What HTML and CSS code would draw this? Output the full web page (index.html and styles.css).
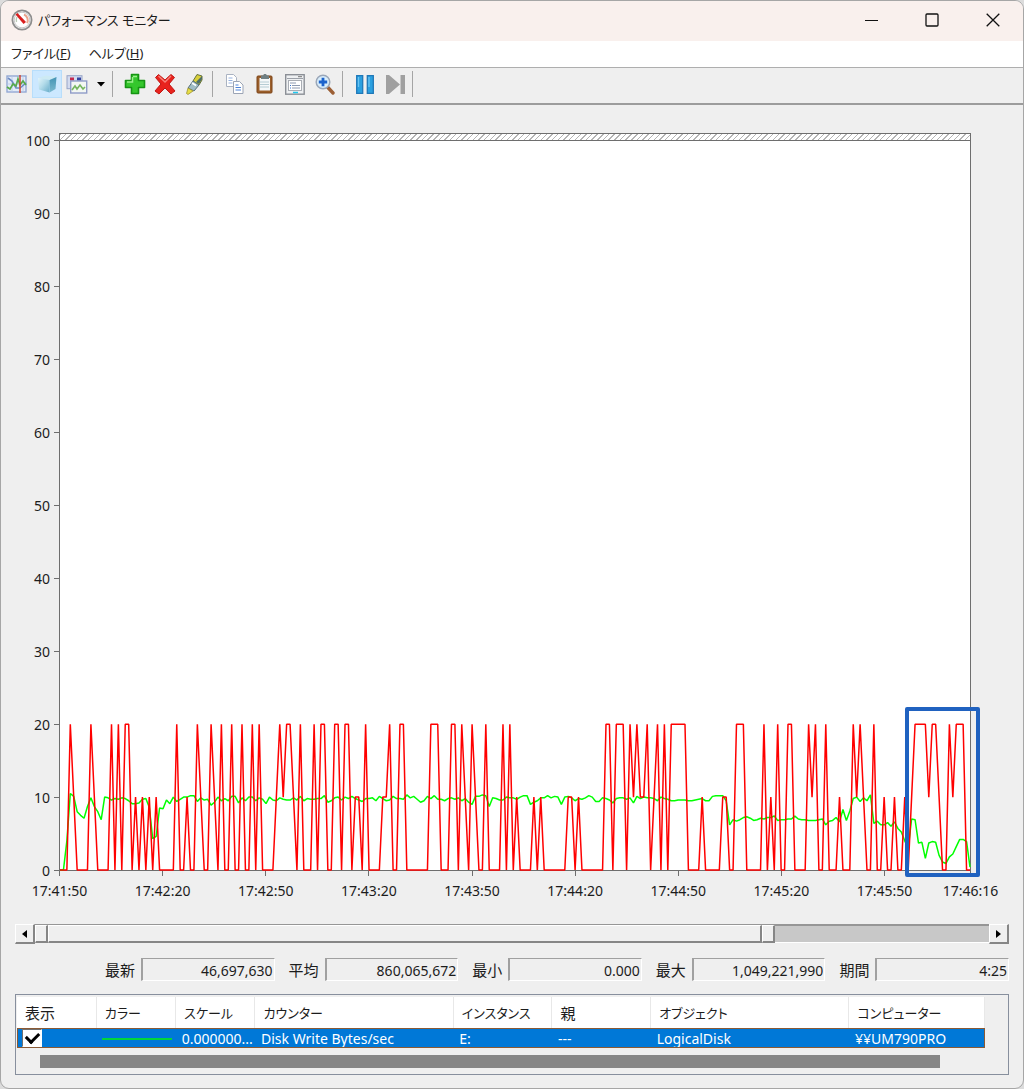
FILE: index.html
```html
<!DOCTYPE html>
<html lang="ja">
<head>
<meta charset="utf-8">
<title>パフォーマンス モニター</title>
<link rel="stylesheet" href="styles.css">
</head>
<body>
<div class="window">
  <header class="titlebar">
    <svg class="app-icon" viewBox="0 0 22 22" width="22" height="22" aria-hidden="true">
      <circle cx="11" cy="11" r="9.6" fill="#f4f4f4" stroke="#8d8d8d" stroke-width="1.8"/>
      <circle cx="11" cy="11" r="7.8" fill="#fff" stroke="#c9c9c9"/>
      <path d="M13 5.5A6 6 0 0 1 16 14" fill="none" stroke="#e9a58c" stroke-width="2"/>
      <path d="M5.5 13A6 6 0 0 1 6 8" fill="none" stroke="#b9c9b5" stroke-width="1.4"/>
      <path d="M4.500 5.500l2-1.500 8.500 9-2.500 2z" fill="#d91f1f"/>
    </svg>
    <h1 class="title">パフォーマンス モニター</h1>
    <div class="caption">
      <button class="caption-btn" aria-label="最小化"><svg viewBox="0 0 14 14" width="14" height="14"><path d="M1 7.500h13" stroke="#111"/></svg></button>
      <button class="caption-btn" aria-label="最大化"><svg viewBox="0 0 14 14" width="14" height="14"><rect x="1" y="1" width="12" height="12" rx="1" fill="none" stroke="#111" stroke-width="1.3"/></svg></button>
      <button class="caption-btn" aria-label="閉じる"><svg viewBox="0 0 14 14" width="14" height="14"><path d="M.7.7l12.6 12.6M13.3.7L.7 13.3" stroke="#111" stroke-width="1.3"/></svg></button>
    </div>
  </header>

  <nav class="menubar">
    <button class="menu">ファイル(<u>F</u>)</button>
    <button class="menu">ヘルプ(<u>H</u>)</button>
  </nav>

  <div class="toolbar">
    <button class="tool" aria-label="現在のアクティビティの表示">
      <svg viewBox="0 0 22 18" width="22" height="18">
        <rect x="1" y="1" width="19" height="16" fill="#e3ecf8" stroke="#93a9d4" stroke-width="1.400"/>
        <path d="M1 9h19M6 1v16M17 1v16" stroke="#b5c8e6" stroke-width=".8"/>
        <path d="M2 3l4 3 4 7 4 0 6-5" fill="none" stroke="#6d8cc4" stroke-width="1.600"/>
        <path d="M1 12l3 2 3-5 3 2 2-7 2 6 3-4 3 4" fill="none" stroke="#58ab4c" stroke-width="1.700"/>
        <path d="M14 0v18" stroke="#cf4632" stroke-width="1.500"/>
      </svg>
    </button>
    <button class="tool tool-active" aria-label="ログ データの表示">
      <svg viewBox="0 0 22 20" width="22" height="20">
        <defs>
          <linearGradient id="cube-front" x1="0" y1="0" x2="1" y2="1"><stop offset="0" stop-color="#e2f4fb"/><stop offset=".45" stop-color="#b4dcea"/><stop offset="1" stop-color="#68adca"/></linearGradient>
          <linearGradient id="cube-side" x1="0" y1="0" x2="0" y2="1"><stop offset="0" stop-color="#4494b4"/><stop offset="1" stop-color="#7cbad0"/></linearGradient>
        </defs>
        <path d="M2 4l8-2.500L20.500 3 13.500 6z" fill="#cdeaf3"/>
        <path d="M2 4l11.500 2v12.500L3 15.500z" fill="url(#cube-front)"/>
        <path d="M13.500 6l7-3-1 12-6 3.500z" fill="url(#cube-side)"/>
      </svg>
    </button>
    <button class="tool" aria-label="グラフの種類の変更">
      <svg viewBox="0 0 22 19" width="22" height="19">
        <rect x="1" y=".7" width="15" height="13" fill="#d3dbef" stroke="#98a6c8"/>
        <rect x="4" y="2.500" width="4" height="3" fill="#c4294d"/>
        <rect x="11" y="2.500" width="4" height="3" fill="#3343a0"/>
        <rect x="4.700" y="6" width="16" height="12" fill="#f3f7f3" stroke="#8f9cc8" stroke-width="1.400"/>
        <path d="M6 15l3-4 2 3 3-4 3 4 2-2" fill="none" stroke="#77b660" stroke-width="1.600"/>
      </svg>
    </button>
    <button class="tool-drop" aria-label="グラフの種類"><svg viewBox="0 0 8 5" width="8" height="5"><path d="M0 0h8L4 4.500z" fill="#000"/></svg></button>
    <span class="sep"></span>
    <button class="tool" aria-label="追加">
      <svg viewBox="0 0 22 22" width="22" height="22"><path d="M7.500 1.500h7v6h6v7h-6v6h-7v-6h-6v-7h6z" fill="#35c72c" stroke="#169413" stroke-width="1.600" stroke-linejoin="round"/><path d="M9 3.500h4M3 9h5.500V4" fill="none" stroke="#9cf08d" stroke-width="1.500"/></svg>
    </button>
    <button class="tool" aria-label="削除">
      <svg viewBox="0 0 22 22" width="22" height="22"><path d="M1.500 4.500L4.500 1.500 11 7l6-5.500 3.500 3L15 11l6 7-4 3-6-6-6 6-4-3 6-7z" fill="#e8231d" stroke="#c01614" stroke-linejoin="round"/><path d="M4.500 3l6.500 6 6-6" fill="none" stroke="#f78179" stroke-width="1.400"/></svg>
    </button>
    <button class="tool" aria-label="強調表示">
      <svg viewBox="0 0 20 22" width="20" height="22"><path d="M12 1.500l5 1.500v4l-3 5-6-4z" fill="#d9cf3a" stroke="#66733c"/><path d="M8 8l6 4-5 6-6-3z" fill="#a0bcc4" stroke="#587078"/><path d="M11 9l3 2 3-5V3z" fill="#4d6d67"/><path d="M3 15l5 3-5 3.500-1.500-1z" fill="#e7dd45" stroke="#9d9330" stroke-width=".8"/><path d="M7 10l4 2.500" stroke="#fff" stroke-width="1.500"/></svg>
    </button>
    <span class="sep"></span>
    <button class="tool" aria-label="プロパティのコピー">
      <svg viewBox="0 0 18 20" width="18" height="20"><path d="M.5.5h7l3 3v9H.5z" fill="#fff" stroke="#aab3c2"/><path d="M2.500 4h4M2.500 6.500h4M2.500 9h4" stroke="#95b1df"/><path d="M7.500 7.500h6l3.500 3.500v8.500H7.500z" fill="#fff" stroke="#9ba4b5"/><path d="M9.500 11h3M9.500 13.500h5.500M9.500 16h5.500" stroke="#4e83d8" stroke-width="1.200"/></svg>
    </button>
    <button class="tool" aria-label="カウンター リストの貼り付け">
      <svg viewBox="0 0 18 20" width="18" height="20"><rect x="1" y="2" width="15" height="17" rx="1" fill="#9b5f2b" stroke="#7d4518"/><path d="M3.500 4h10.500v12.500H3.500z" fill="#f5f8f9"/><path d="M4 8h9M4 10.500h9M4 13h9" stroke="#b6ccd4"/><path d="M5 1.500h2L8 0h2l1 1.500h2V5H5z" fill="#6f7f83"/></svg>
    </button>
    <button class="tool" aria-label="プロパティ">
      <svg viewBox="0 0 20 21" width="20" height="21"><rect x=".7" y=".7" width="18.500" height="19.500" fill="#eef0f2" stroke="#8b8f96" stroke-width="1.400"/><path d="M2 4.500h16" stroke="#9ba0a8"/><path d="M13 2.700h4" stroke="#777"/><rect x="3.500" y="6.500" width="13" height="10" fill="#fff" stroke="#a9adb4"/><path d="M5 9h6M7 11.500h8M7 14h8" stroke="#8e9ab0"/><path d="M5 11.500h1M5 14h1" stroke="#3877d1"/><path d="M8 18.500h5" stroke="#20c7ee" stroke-width="1.600"/></svg>
    </button>
    <button class="tool" aria-label="拡大">
      <svg viewBox="0 0 20 21" width="20" height="21"><path d="M12.500 13l5.500 6" stroke="#9c5f35" stroke-width="3.400" stroke-linecap="round"/><circle cx="8" cy="8" r="6.800" fill="#d8edfb" stroke="#9ba7b8" stroke-width="1.500"/><path d="M8 3.800v8.400M3.800 8h8.400" stroke="#1b62cc" stroke-width="2.800"/></svg>
    </button>
    <span class="sep"></span>
    <button class="tool" aria-label="表示の固定">
      <svg viewBox="0 0 18 19" width="18" height="19"><path d="M.7.7h6v17.600h-6zM11.300.7h6v17.600h-6z" fill="#2ba0e0" stroke="#1f78b8" stroke-width="1.300"/><path d="M2.500 2v10M13 2v10" stroke="#69c4f3" stroke-width="1.300"/></svg>
    </button>
    <button class="tool" aria-label="データの更新">
      <svg viewBox="0 0 19 19" width="19" height="19"><path d="M0 0h3l11 9.500L3 19H0zM14.500 0H19v19h-4.500z" fill="#a0a0a0"/></svg>
    </button>
    <span class="sep"></span>
  </div>

  <main class="content">
    <section class="chart" aria-label="グラフ">
      <ul class="y-axis">
        <li>100</li><li>90</li><li>80</li><li>70</li><li>60</li><li>50</li><li>40</li><li>30</li><li>20</li><li>10</li><li>0</li>
      </ul>
      <div class="plot">
        <div class="plot-cap"></div>
        <div class="plot-area">
          <svg class="series" viewBox="0 0 265 100" preserveAspectRatio="none" aria-hidden="true">
            <g transform="matrix(1 0 0 -1 0 100)">
              <polyline class="line line-green" points="0,0 1,0 2,4 3,10.500 4,10.100 5,8 6,7.500 7,7.100 8,8.700 9,9.900 10,8.700 11,8 12,6.900 13,10 14,9.900 15,9.600 16,9.800 17,9.700 18,9.900 19,9.800 20,9.500 21,9.100 22,9.100 23,9.200 24,9.700 25,9.800 26,8.600 27,4.300 28,4.600 29,8.500 30,8.400 31,9.600 32,9.100 33,10 34,9.400 35,9.700 36,10 37,10 38,10.200 39,10.200 40,9.400 41,9.900 42,9.600 43,9.700 44,8.900 45,9.300 46,10 47,9.500 48,9.800 49,9.500 50,10.100 51,10.100 52,9.200 53,9.900 54,9.500 55,10 56,10 57,9.500 58,9.900 59,9.700 60,9.100 61,10 62,9.600 63,9.500 64,9.900 65,9.700 66,9.600 67,9.600 68,9.900 69,9.600 70,10.100 71,9.500 72,9.800 73,9.700 74,9.700 75,9.800 76,9.800 77,10.200 78,9.300 79,9.500 80,9.900 81,10 82,9.600 83,10 84,9.800 85,10.100 86,9.800 87,9.600 88,9.400 89,9.800 90,9.800 91,9.900 92,9.500 93,10.100 94,9.800 95,9.500 96,9.600 97,10.100 98,9.800 99,9.800 100,9.700 101,10.300 102,9.900 103,10.100 104,9.700 105,9.300 106,9.500 107,10.100 108,9.800 109,10.200 110,9.700 111,9.700 112,9.500 113,9.800 114,9.900 115,9.700 116,9.900 117,9.500 118,9.800 119,9.300 120,9 121,10.100 122,10.100 123,10.300 124,10.200 125,8.700 126,9.900 127,9.800 128,9.600 129,9.600 130,10 131,9.900 132,9.900 133,9.700 134,10 135,10.200 136,10.200 137,9 138,9.300 139,9.500 140,9.900 141,9.900 142,10.200 143,9.900 144,10.100 145,10 146,9 147,10 148,10.100 149,9.900 150,9.500 151,9.800 152,9.700 153,9.900 154,10.200 155,10 156,9.400 157,9.400 158,9.900 159,9.800 160,9.600 161,9.200 162,9.800 163,9.900 164,9.900 165,9.700 166,9.900 167,9.200 168,10.100 169,9.800 170,10 171,9.900 172,9.900 173,9.800 174,9.500 175,10 176,9.800 177,9.700 178,9.500 179,9.500 180,9.600 181,9.600 182,9.600 183,9.500 184,9.500 185,9.600 186,9.700 187,9.800 188,9.500 189,9.500 190,10.100 191,10.200 192,10.200 193,10.200 194,9.500 195,6.200 196,6.900 197,6.700 198,6.900 199,7.200 200,7.300 201,7.100 202,6.800 203,6.900 204,7.100 205,7 206,7.200 207,7.200 208,7.400 209,6.800 210,6.900 211,6.900 212,7 213,7 214,7.400 215,7 216,6.900 217,6.900 218,6.800 219,6.800 220,6.800 221,6.900 222,7 223,6.200 224,6.700 225,6.800 226,7.200 227,6.600 228,8.300 229,6.800 230,8.100 231,9.800 232,10 233,9.400 234,9.900 235,9.500 236,10.300 237,6.400 238,6.700 239,6.200 240,6.200 241,6.500 242,6 243,6.600 244,5.700 245,5.200 246,4 247,3 248,7 249,6.900 250,3.700 251,3.800 252,1.600 253,3.700 254,3.900 255,3.800 256,2 257,1.100 258,.9 259,1.800 260,2.200 261,3.200 262,4.200 263,4.200 264,3.900 265,.4"/>
              <polyline class="line line-red" points="0,0 2,0 3,20 4,10 5,0 8,0 9,20 10,10 11,0 14,0 15,20 16,0 17,20 18,0 19,20 20,20 21,0 22,10 23,0 24,10 25,0 26,10 27,0 28,10 29,0 33,0 34,20 35,0 36,0 37,10 38,0 39,0 40,20 41,10 42,0 43,0 44,20 45,10 46,0 47,20 48,0 49,0 50,20 51,0 52,0 53,20 54,0 55,0 56,20 57,0 58,20 59,0 62,0 63,10 64,20 65,10 66,20 67,20 68,10 69,0 70,20 71,0 73,0 74,20 75,0 76,20 77,20 78,0 79,0 80,20 81,20 82,0 83,20 84,20 85,0 86,10 87,10 88,0 89,20 90,0 93,0 94,10 95,10 96,20 97,0 98,0 99,20 100,20 101,0 107,0 108,20 110,20 111,0 113,0 114,20 115,20 116,0 117,20 118,10 119,0 120,20 121,10 122,0 123,0 124,20 125,0 128,0 129,20 130,0 131,20 132,0 133,10 134,0 137,0 138,10 139,0 140,10 141,0 147,0 148,10 149,10 150,0 151,10 152,0 158,0 159,20 160,20 161,0 162,20 164,20 165,0 166,20 167,10 168,20 169,10 170,10 171,20 172,0 173,10 174,20 175,0 176,20 177,0 178,20 182,20 183,0 186,0 187,10 188,0 192,0 193,10 194,10 195,0 196,0 197,20 199,20 200,0 204,0 205,20 206,0 207,10 208,0 209,20 210,0 211,0 212,20 213,20 214,0 217,0 218,20 219,10 220,20 221,0 222,0 223,20 224,0 226,0 227,10 228,0 230,0 231,20 232,10 233,20 234,10 235,0 236,0 237,20 238,0 239,0 240,10 241,0 242,0 243,10 244,0 245,0 246,10 247,0 248,10 249,20 252,20 253,10 254,20 255,20 256,10 257,0 258,0 259,20 260,10 261,20 263,20 264,0 265,0"/>
            </g>
          </svg>
          <div class="highlight"></div>
        </div>
      </div>
      <ul class="x-axis">
        <li><span>17:41:50</span></li><li><span>17:42:20</span></li><li><span>17:42:50</span></li><li><span>17:43:20</span></li><li><span>17:43:50</span></li><li><span>17:44:20</span></li><li><span>17:44:50</span></li><li><span>17:45:20</span></li><li class="x-short"><span>17:45:50</span></li><li class="x-end"><span>17:46:16</span></li>
      </ul>
    </section>

    <div class="timebar">
      <button class="time-arrow" aria-label="戻る"><svg viewBox="0 0 5 8" width="5" height="8"><path d="M5 0v8L0 4z" fill="#000"/></svg></button>
      <div class="time-track">
        <button class="time-grip" aria-label="開始時刻"></button>
        <button class="time-range" aria-label="時間の範囲"></button>
        <button class="time-grip" aria-label="終了時刻"></button>
        <span class="time-rest"></span>
      </div>
      <button class="time-arrow" aria-label="進む"><svg viewBox="0 0 5 8" width="5" height="8"><path d="M0 0v8l5-4z" fill="#000"/></svg></button>
    </div>

    <div class="stats">
      <div class="stat"><label for="last">最新</label><input id="last" type="text" readonly value="46,697,630"></div>
      <div class="stat"><label for="avg">平均</label><input id="avg" type="text" readonly value="860,065,672"></div>
      <div class="stat"><label for="min">最小</label><input id="min" type="text" readonly value="0.000"></div>
      <div class="stat"><label for="max">最大</label><input id="max" type="text" readonly value="1,049,221,990"></div>
      <div class="stat"><label for="span">期間</label><input id="span" type="text" readonly value="4:25"></div>
    </div>

    <div class="legend">
      <table class="counters">
        <colgroup><col class="c-show"><col class="c-small"><col class="c-small"><col class="c-wide"><col class="c-mid"><col class="c-mid"><col class="c-wide"><col class="c-last"></colgroup>
        <thead>
          <tr><th class="kanji">表示</th><th>カラー</th><th>スケール</th><th>カウンター</th><th>インスタンス</th><th class="kanji">親</th><th>オブジェクト</th><th>コンピューター</th></tr>
        </thead>
        <tbody>
          <tr>
            <td class="cell-check"><input type="checkbox" checked aria-label="表示"></td>
            <td><span class="swatch"></span></td>
            <td>0.000000...</td><td>Disk Write Bytes/sec</td><td>E:</td><td>---</td><td>LogicalDisk</td><td>¥¥UM790PRO</td>
          </tr>
        </tbody>
      </table>
      <div class="hscroll"></div>
    </div>
  </main>
</div>
</body>
</html>
```
FILE: styles.css
```css
* { box-sizing: border-box; }

body {
  margin: 0;
  background: #dcdcdc;
  color: #1c1c1c;
  font: 14px/20px "Noto Sans", "Noto Sans CJK JP", sans-serif;
  font-feature-settings: "palt";
}

button, input {
  font: inherit;
  font-feature-settings: inherit;
  color: inherit;
  margin: 0;
}

button {
  display: flex;
  align-items: center;
  justify-content: center;
  padding: 0;
  border: 0;
  background: none;
}

ul { margin: 0; padding: 0; list-style: none; }

.window {
  display: flex;
  flex-direction: column;
  min-height: 100vh;
  border: 1px solid #a6a6a6;
  border-radius: 9px;
  background: #efefef;
  overflow: hidden;
}

/* Title bar and menu */
.titlebar {
  display: flex;
  align-items: center;
  height: 40px;
  padding: 0 0 2px 10px;
  background: #f9f0ed;
}
.title {
  flex: 1;
  margin: 0 0 0 5px;
  font-size: 13px;
  font-weight: 400;
}
.caption { display: flex; height: 100%; }
.caption-btn { width: 61px; }

.menubar {
  display: flex;
  height: 26px;
  padding: 0 1px 2px;
  background: #fff;
}
.menu { padding: 0 9px; font-size: 13px; }

/* Toolbar */
.toolbar {
  display: flex;
  align-items: center;
  height: 38px;
  padding: 0 0 3px 1px;
  border-top: 1px solid #aeaeae;
  border-bottom: 2px solid #9c9c9c;
}
.tool { width: 30px; height: 28px; }
.tool-active {
  background: #cce8ff;
  box-shadow: 0 0 0 1px #b8defb inset;
}
.tool-drop { width: 18px; height: 28px; }
.sep {
  width: 1px;
  height: 26px;
  margin: 0 7px 0 2px;
  background: #a5a5a5;
}

/* Graph */
.content {
  flex: 1;
  display: flex;
  flex-direction: column;
  padding: 28px 14px 13px;
}
.chart {
  flex: 1;
  display: grid;
  grid-template: minmax(300px, 1fr) 53px / 44px 1fr;
  padding-right: 38px;
}
.y-axis {
  display: flex;
  flex-direction: column;
  justify-content: space-between;
  padding-top: 7px;
}
.y-axis li {
  display: flex;
  align-items: center;
  justify-content: flex-end;
  gap: 4px;
  height: 1px;
}
.y-axis li::after {
  content: "";
  width: 5px;
  height: 1px;
  background: #6e6e6e;
}
.plot {
  display: flex;
  flex-direction: column;
  border: 1px solid #6e6e6e;
  background: #fff;
}
.plot-cap {
  height: 7px;
  border-bottom: 1px solid #6e6e6e;
  background: repeating-linear-gradient(-45deg, #fff 0 3px, #b4b4b4 3px 4px);
}
.plot-area {
  position: relative;
  flex: 1;
}
.series {
  position: absolute;
  inset: 0;
  width: 100%;
  height: 100%;
  overflow: visible;
}
.line {
  fill: none;
  stroke-width: 1.5px;
  stroke-linejoin: bevel;
  vector-effect: non-scaling-stroke;
}
.line-green { stroke: #0f0; }
.line-red { stroke: #f00; }
.highlight {
  position: absolute;
  top: 77.7%;
  right: -10px;
  bottom: -7px;
  width: 75px;
  border: 4px solid #2062c0;
  border-radius: 2px;
}
.x-axis {
  grid-column: 2;
  display: flex;
}
.x-axis li { flex: 30 1 0; }
.x-axis .x-short { flex-grow: 25; }
.x-axis .x-end { flex: 0 0 1px; }
.x-axis span {
  display: flex;
  flex-direction: column;
  align-items: center;
  gap: 5px;
  width: 1px;
}
.x-axis span::before {
  content: "";
  width: 1px;
  height: 5px;
  background: #6e6e6e;
}

/* Time range bar */
.timebar {
  display: flex;
  height: 20px;
}
.time-arrow, .time-grip, .time-range {
  background: #efefef;
  border: 1px solid #fff;
  border-right: 2px solid #868686;
  border-bottom: 2px solid #868686;
}
.time-arrow { width: 20px; }
.time-track {
  flex: 1;
  display: flex;
  height: 19px;
  border-top: 1px solid #969696;
  background: #c8c8c8;
}
.time-grip { width: 13px; }
.time-range { width: 74.8%; }
.time-rest { flex: 1; border-top: 1px solid #969696; border-bottom: 1px solid #fff; }

/* Statistics */
.stats {
  display: flex;
  gap: 14px;
  padding: 14px 0 13px 90px;
}
.stat {
  flex: 1;
  min-width: 0;
  display: flex;
  align-items: center;
  gap: 6px;
}
.stat label { font-size: 15px; white-space: nowrap; }
.stat input {
  flex: 1;
  min-width: 0;
  height: 23px;
  padding: 2px 1px 0;
  border: 1px solid #fff;
  border-top-color: #a0a0a0;
  border-left: 2px solid #a0a0a0;
  background: #efefef;
  text-align: right;
}

/* Counter list */
.legend {
  padding: 2px 23px 6px 1px;
  border: 1px solid #878f9d;
}
.counters {
  width: 100%;
  table-layout: fixed;
  border-collapse: collapse;
}
.c-show, .c-small { width: 8.2%; }
.c-wide { width: 20.5%; }
.c-mid { width: 10.2%; }
th {
  height: 31px;
  padding: 0 0 0 8px;
  border-right: 1px solid #e8e8e8;
  background: #fff;
  font-size: 13px;
  font-weight: 400;
  text-align: left;
  white-space: nowrap;
}
.kanji { font-size: 15px; }
td {
  height: 20px;
  padding: 2px 6px 0;
  background: #0078d7;
  color: #fff;
  line-height: 18px;
  white-space: nowrap;
}
tbody tr { outline: 1px solid #8a5a35; outline-offset: -1px; }
td.cell-check { padding: 0 5px; }
.cell-check input {
  display: grid;
  place-items: center;
  width: 20px;
  height: 18px;
  appearance: none;
  background: #fff;
  border: 1px solid #fff;
  border-top-color: #707070;
  border-left-color: #707070;
}
.cell-check input::before {
  content: "";
  width: 10px;
  height: 6px;
  border: solid #000;
  border-width: 0 0 3px 3px;
  transform: translateY(-2px) rotate(-45deg);
}
.swatch {
  display: block;
  height: 2px;
  width: 70px;
  background: #00d53c;
}
.hscroll {
  width: 93%;
  height: 13px;
  margin: 7px 0 0 23px;
  background: #868686;
}
```
